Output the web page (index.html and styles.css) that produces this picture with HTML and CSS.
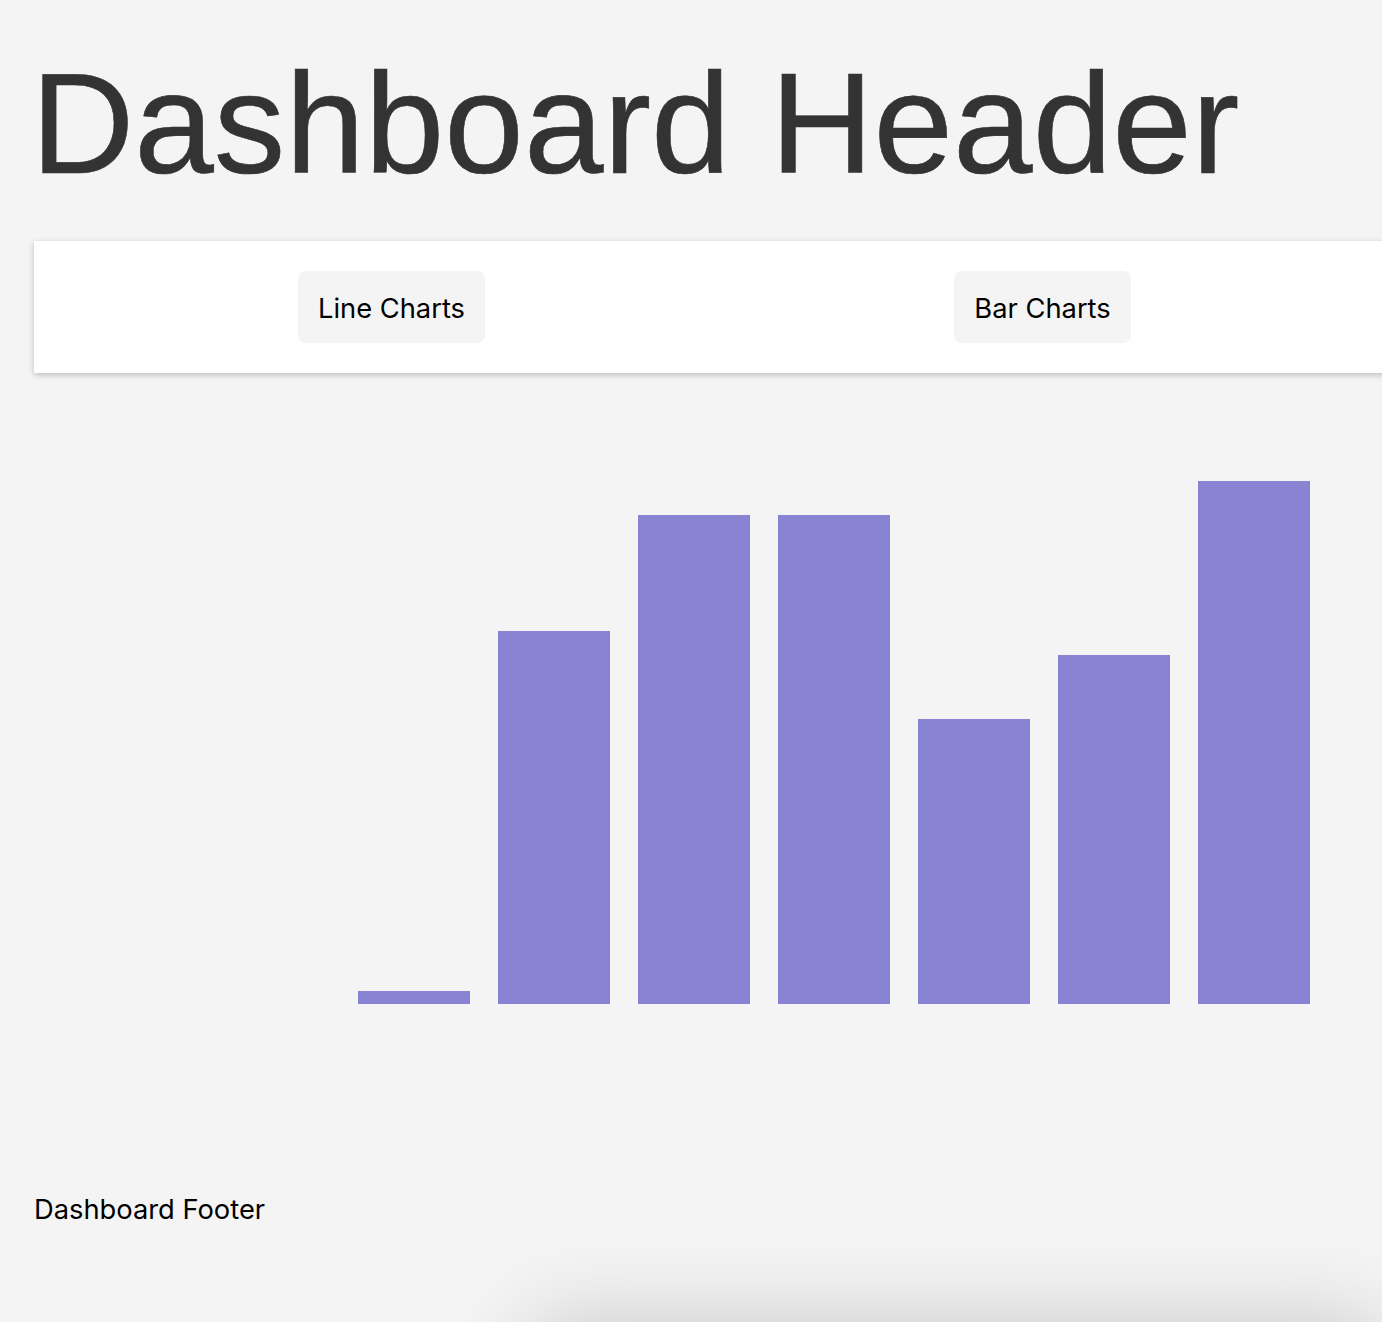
FILE: index.html
```html
<!DOCTYPE html>
<html lang="en">
<head>
<meta charset="utf-8">
<title>Dashboard</title>
<link rel="stylesheet" href="styles.css">
</head>
<body>
<div class="page">
  <h1 class="title">Dashboard Header</h1>
  <nav class="nav">
    <div class="nav-cell"><button class="nav-btn">Line Charts</button></div>
    <div class="nav-cell"><button class="nav-btn">Bar Charts</button></div>
  </nav>
  <section class="chart">
    <div class="bar" style="height:13px"></div>
    <div class="bar" style="height:373px"></div>
    <div class="bar" style="height:489px"></div>
    <div class="bar" style="height:489px"></div>
    <div class="bar" style="height:285px"></div>
    <div class="bar" style="height:349px"></div>
    <div class="bar" style="height:523px"></div>
  </section>
  <footer class="footer">Dashboard Footer</footer>
  <div class="below-card"></div>
</div>
</body>
</html>
```
FILE: styles.css
```css
html, body {
  margin: 0;
  padding: 0;
  background: #f4f4f4;
  overflow: hidden;
}
body {
  font-family: Inter, "Noto Sans", sans-serif;
  color: #000;
}
.page {
  padding-left: 34px;
}
.title {
  font-family: "Liberation Sans", Arial, sans-serif;
  font-weight: 400;
  font-size: 143px;
  line-height: 163px;
  color: #333333;
  margin: 42px 0 36px -3px;
  white-space: nowrap;
  -webkit-text-stroke: 0.6px #333333;
}
.nav {
  width: 1366px;
  box-sizing: border-box;
  background: #ffffff;
  padding: 30px 32px;
  display: grid;
  grid-template-columns: 1fr 1fr;
  box-shadow: 0 2px 6px rgba(0, 0, 0, 0.22);
}
.nav-cell {
  display: flex;
  justify-content: center;
}
.nav-btn {
  font-family: Inter, "Noto Sans", sans-serif;
  font-size: 27.3px;
  line-height: 32px;
  color: #000;
  background: #f4f4f4;
  border: none;
  border-radius: 8px;
  padding: 22px 20px 18px;
}
.chart {
  height: 631px;
  box-sizing: border-box;
  padding-left: 324px;
  display: flex;
  align-items: flex-end;
  gap: 28px;
}
.bar {
  width: 112px;
  background: #8884d3;
}
.footer {
  margin-top: 190px;
  font-size: 27.3px;
  line-height: 32px;
}
.below-card {
  margin: 105px 0 0 500px;
  height: 300px;
  background: #f4f4f4;
  box-shadow: 0 0 90px rgba(0, 0, 0, 0.22);
}
```
